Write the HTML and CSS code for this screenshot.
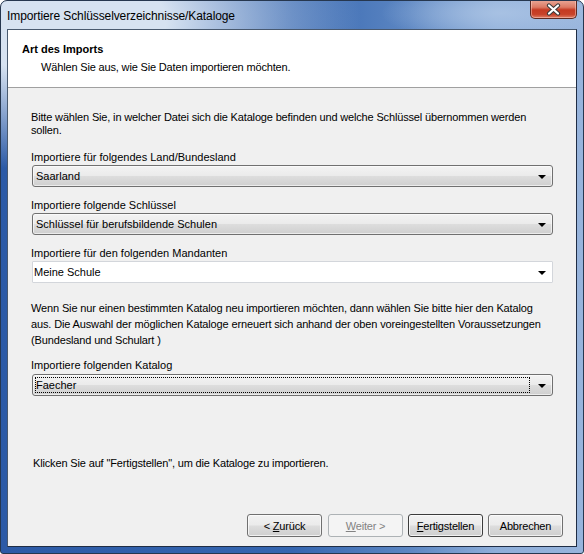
FILE: index.html
```html
<!DOCTYPE html>
<html lang="de">
<head>
    <meta charset="UTF-8">
    <title>Importiere Schlüsselverzeichnisse/Kataloge</title>
    <link rel="stylesheet" href="styles.css">
</head>
<body>
    <div class="window">
        <div class="titlebar">
            <span class="title">Importiere Schlüsselverzeichnisse/Kataloge</span>
            <button type="button" class="close">
                <svg width="17" height="13" viewBox="0 0 17 13">
                    <path d="M4 2.5 L13 10.5 M13 2.5 L4 10.5" stroke="#3a3a3a" stroke-width="4.2" stroke-linecap="round"/>
                    <path d="M4 2.5 L13 10.5 M13 2.5 L4 10.5" stroke="#ffffff" stroke-width="2.2" stroke-linecap="round"/>
                </svg>
            </button>
        </div>
        <div class="client">
            <div class="header">
                <div class="header-title">Art des Imports</div>
                <div class="header-sub">Wählen Sie aus, wie Sie Daten importieren möchten.</div>
            </div>
            <div class="content">
                <p class="intro">Bitte wählen Sie, in welcher Datei sich die Kataloge befinden und welche Schlüssel übernommen werden sollen.</p>

                <div class="field first">
                    <label>Importiere für folgendes Land/Bundesland</label>
                    <div class="combo">
                        <span class="combo-text">Saarland</span>
                        <span class="arrow"></span>
                    </div>
                </div>
                <div class="field">
                    <label>Importiere folgende Schlüssel</label>
                    <div class="combo">
                        <span class="combo-text">Schlüssel für berufsbildende Schulen</span>
                        <span class="arrow"></span>
                    </div>
                </div>
                <div class="field">
                    <label>Importiere für den folgenden Mandanten</label>
                    <div class="combo edit">
                        <span class="combo-text">Meine Schule</span>
                        <span class="arrow"></span>
                    </div>
                </div>

                <p class="hint">Wenn Sie nur einen bestimmten Katalog neu importieren möchten, dann wählen Sie bitte hier den Katalog aus. Die Auswahl der möglichen Kataloge erneuert sich anhand der oben voreingestellten Voraussetzungen (Bundesland und Schulart )</p>

                <div class="field catalog">
                    <label>Importiere folgenden Katalog</label>
                    <div class="combo focused">
                        <span class="focus-box">Faecher</span>
                        <span class="arrow"></span>
                    </div>
                </div>

                <p class="finish">Klicken Sie auf "Fertigstellen", um die Kataloge zu importieren.</p>
            </div>
            <div class="footer">
                <button type="button" class="btn back">&lt; <u>Z</u>urück</button>
                <button type="button" class="btn" disabled><u>W</u>eiter &gt;</button>
                <button type="button" class="btn next"><u>F</u>ertigstellen</button>
                <button type="button" class="btn">Abbrechen</button>
            </div>
        </div>
    </div>
</body>
</html>
```

FILE: styles.css
```css
body {
    margin: 0;
    padding: 0;
    background: #ffffff;
    font-family: "Liberation Sans", Arial, sans-serif;
    font-size: 11px;
    color: #000;
}
.window {
    width: 584px;
    height: 554px;
    box-sizing: border-box;
    border: 1px solid #26374f;
    border-radius: 7px 7px 3px 3px;
    display: flex;
    flex-direction: column;
    background:
        radial-gradient(ellipse 300px 150px at 60px 20px, rgba(214, 226, 241, 1) 35%, rgba(214, 226, 241, 0) 100%),
        radial-gradient(ellipse 120px 30px at 500px 12px, rgba(170, 195, 228, 0.9), rgba(170, 195, 228, 0) 100%),
        linear-gradient(to right, #2c5aa6 0%, #3566b0 50%, #5c86c2 70%, #8eaed9 85%, #97b4dc 100%);
    overflow: hidden;
}
.titlebar {
    height: 28px;
    display: flex;
    justify-content: space-between;
    align-items: flex-start;
    flex-shrink: 0;
}
.title {
    margin: 8px 0 0 6px;
    font-size: 12px;
    letter-spacing: -0.1px;
    color: #000;
}
.close {
    width: 47px;
    height: 19px;
    margin: -1px 6px 0 0;
    padding: 0;
    border: 1px solid #5e2a22;
    border-top: none;
    border-radius: 0 0 5px 5px;
    background: linear-gradient(to bottom, #eaa998 0%, #dc7a64 40%, #c53a22 55%, #c8432a 80%, #e07e66 100%);
    box-shadow: inset 0 0 0 1px rgba(255, 220, 210, 0.45);
    display: flex;
    align-items: center;
    justify-content: center;
}
.client {
    flex: 1;
    margin: 0 6px 6px 6px;
    border: 1px solid #48596f;
    border-right-color: #1f2d45;
    border-bottom-color: #1f2d45;
    background: #f0f0f0;
    display: flex;
    flex-direction: column;
}
.header {
    height: 58px;
    box-sizing: border-box;
    background: #ffffff;
    border-bottom: 1px solid #a0a0a0;
    padding: 12px 0 0 14px;
}
.header-title {
    font-weight: bold;
    line-height: 14px;
}
.header-sub {
    margin: 4px 0 0 19px;
    line-height: 14px;
    letter-spacing: -0.16px;
}
.content {
    padding: 23px 23px 0 23px;
}
p {
    margin: 0;
    line-height: 13px;
}
.intro {
    letter-spacing: -0.16px;
}
.field {
    margin-top: 12px;
}
.field.first {
    margin-top: 14px;
}
.field label {
    display: block;
    line-height: 13px;
    margin-bottom: 1px;
}
.combo {
    height: 22px;
    box-sizing: border-box;
    margin-left: 1px;
    border: 1px solid #707070;
    border-radius: 3px;
    background: linear-gradient(to bottom, #f3f3f3 0%, #ebebeb 48%, #dddddd 52%, #cfcfcf 100%);
    box-shadow: inset 0 0 0 1px rgba(255, 255, 255, 0.6);
    display: flex;
    align-items: center;
    justify-content: space-between;
    padding: 0 6px 0 3px;
}
.combo.edit {
    background: #ffffff;
    border-color: #d3d6db;
    border-radius: 1px;
    box-shadow: none;
    padding-left: 1px;
}
.combo-text {
    line-height: 13px;
}
.arrow {
    width: 0;
    height: 0;
    border-left: 4px solid transparent;
    border-right: 4px solid transparent;
    border-top: 4px solid #000;
    margin-top: 1px;
}
.hint {
    margin-top: 17px;
    line-height: 16px;
    letter-spacing: -0.14px;
}
.field.catalog {
    margin-top: 11px;
}
.catalog label {
    margin-bottom: 2px;
}
.combo.focused {
    padding: 0 6px 0 2px;
}
.focus-box {
    flex: 1;
    outline: 1px dotted #000;
    outline-offset: -1px;
    height: 16px;
    line-height: 16px;
    padding-left: 1px;
    margin-right: 8px;
}
.finish {
    margin-top: 61px;
    padding-left: 2px;
    letter-spacing: -0.15px;
}
.footer {
    margin-top: auto;
    display: flex;
    justify-content: flex-end;
    gap: 5px;
    padding: 0 13px 9px 0;
}
.btn {
    width: 75px;
    height: 23px;
    padding: 0;
    border: 1px solid #707070;
    border-radius: 3px;
    background: linear-gradient(to bottom, #f2f2f2 0%, #ebebeb 48%, #dddddd 52%, #cfcfcf 100%);
    box-shadow: inset 0 0 0 1px rgba(255, 255, 255, 0.7);
    font-family: "Liberation Sans", Arial, sans-serif;
    font-size: 11px;
    letter-spacing: -0.2px;
    color: #000;
}
.btn.back {
    margin-right: 1px;
}
.btn:disabled {
    border-color: #adb2b5;
    background: #f4f4f4;
    color: #838383;
    box-shadow: none;
}
.btn.next {
    border-color: #3c3c3c;
}
```
